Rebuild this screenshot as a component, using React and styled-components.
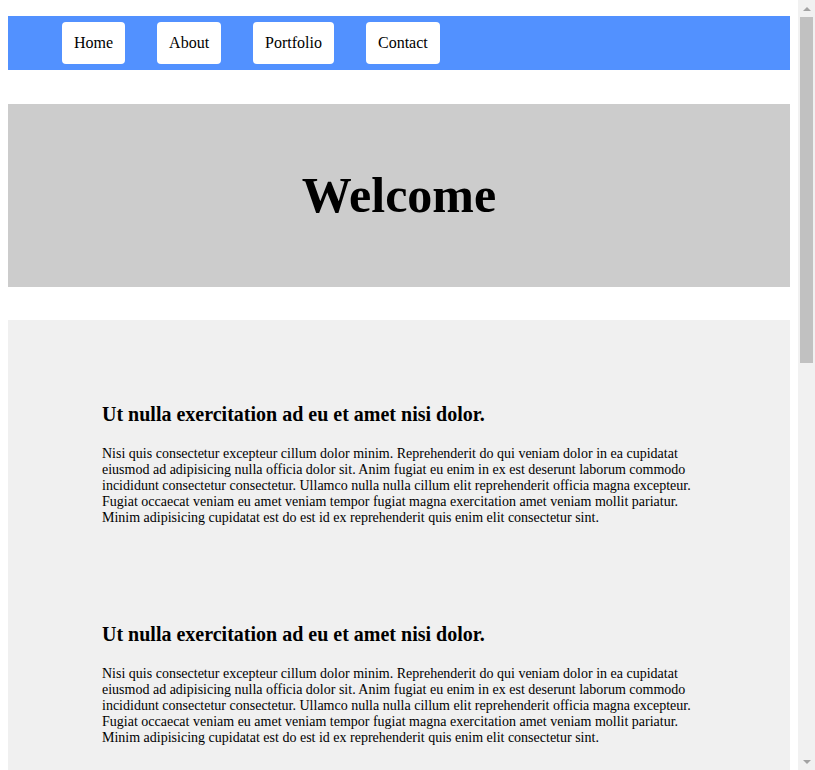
import React from "react";
import styled, {createGlobalStyle} from "styled-components";

const GlobalStyle = createGlobalStyle`
    html {
        scrollbar-width: none;
    }
    html::-webkit-scrollbar {
        display: none;
    }
    body {
        margin: 0;
        padding: 16px 25px 8px 8px;
        font-family: "Liberation Serif", "Times New Roman", serif;
        color: #000;
        background: #fff;
    }
`;

export const Nav = styled.ul`
    display: flex;
    align-items: center;
    gap: 32px;
    list-style: none;
    margin: 0 0 34px;
    padding: 6px 0 6px 54px;
    background: #5291ff;
`;

export const NavItem = styled.li`
    background: #fff;
    border-radius: 4px;
    padding: 12px;
    font-size: 16px;
    line-height: 18px;
    cursor: pointer;
`;

export const Hero = styled.header`
    background: #cccccc;
    padding: 32px 0;
    margin-bottom: 33px;
    text-align: center;
`;

export const Title = styled.h1`
    margin: 30px 0;
    font-size: 50px;
    line-height: 59px;
    font-weight: bold;
`;

export const Content = styled.section`
    background: #f0f0f0;
    padding: 0 0 0 94px;
`;

export const Article = styled.article`
    max-width: 600px;
    padding-top: 63px;
`;

export const Heading = styled.h3`
    font-size: 20px;
    line-height: 23px;
    margin: 20px 0;
`;

export const Text = styled.p`
    font-size: 14px;
    margin: 14px 0;
`;

// the window's scrollbar, drawn over the right edge
export const ScrollTrack = styled.div`
    position: fixed;
    top: 0;
    right: 0;
    bottom: 0;
    width: 17px;
    background: #f1f1f1;
    display: flex;
    flex-direction: column;
    align-items: center;
`;

export const Arrow = styled.div`
    height: 17px;
    width: 17px;
    display: flex;
    align-items: center;
    justify-content: center;
    &::before {
        content: "";
        border-left: 4px solid transparent;
        border-right: 4px solid transparent;
        ${props => props.down
            ? `border-top: 4px solid #a3a3a3;`
            : `border-bottom: 4px solid #a3a3a3;`}
    }
`;

export const Thumb = styled.div`
    width: 13px;
    height: 346px;
    background: #c1c1c1;
`;

export const Spacer = styled.div`
    flex: 1;
`;

const links = ["Home", "About", "Portfolio", "Contact"];

const lorem = "Nisi quis consectetur excepteur cillum dolor minim. Reprehenderit do qui veniam dolor in ea cupidatat eiusmod ad adipisicing nulla officia dolor sit. Anim fugiat eu enim in ex est deserunt laborum commodo incididunt consectetur consectetur. Ullamco nulla nulla cillum elit reprehenderit officia magna excepteur. Fugiat occaecat veniam eu amet veniam tempor fugiat magna exercitation amet veniam mollit pariatur. Minim adipisicing cupidatat est do est id ex reprehenderit quis enim elit consectetur sint.";

const articles = [1, 2, 3, 4, 5, 6].map(i => ({
    id: i,
    title: "Ut nulla exercitation ad eu et amet nisi dolor.",
    text: lorem,
}));

export default function App() {
    return (
        <>
            <GlobalStyle/>
            <Nav>
                {links.map(l => (
                    <NavItem key={l}>{l}</NavItem>
                ))}
            </Nav>
            <Hero>
                <Title>Welcome</Title>
            </Hero>
            <Content>
                {articles.map(a => (
                    <Article key={a.id}>
                        <Heading>{a.title}</Heading>
                        <Text>{a.text}</Text>
                    </Article>
                ))}
            </Content>
            <ScrollTrack>
                <Arrow/>
                <Thumb/>
                <Spacer/>
                <Arrow down/>
            </ScrollTrack>
        </>
    );
}
